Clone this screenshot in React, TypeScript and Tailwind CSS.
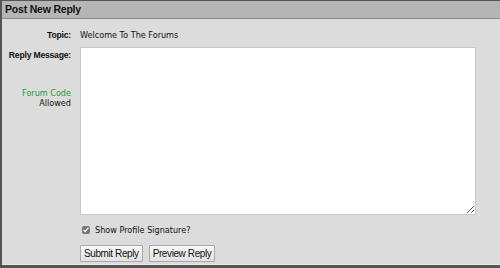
export default function App() {
  const body = { fontFamily: '"DejaVu Sans", Verdana, sans-serif' };
  const bold = { fontFamily: '"Liberation Sans", Arial, sans-serif' };

  return (
    <div className="w-[500px] h-[268px] bg-[#555] pl-[2px] pt-[1px] pb-[3px] overflow-hidden" style={body}>
      <div className="h-full flex flex-col bg-[#dcdcdc] border-b border-[#ececec]">
        {/* title bar */}
        <div className="h-[18px] bg-[#b5b5b5] border-b border-[#8c8c8c] flex items-center pl-[3px]">
          <h1 className="text-[10.5px] tracking-[-0.2px] font-bold text-[#111] leading-none" style={bold}>
            Post New Reply
          </h1>
        </div>

        <div className="flex-1 grid grid-cols-[69px_1fr] gap-x-[9px] pt-[9px] text-[8.1px] text-[#111]">
          <div className="text-right font-bold text-[8.6px] tracking-[-0.2px] leading-[14px] whitespace-nowrap" style={bold}>
            Topic:
          </div>
          <div className="leading-[14px]">Welcome To The Forums</div>

          <div className="text-right leading-[14px] pt-[4px] whitespace-nowrap">
            <div className="font-bold text-[8.6px] tracking-[-0.2px]" style={bold}>Reply Message:</div>
            <div className="mt-[26px] leading-[10px]">
              <div className="text-[#2a9a3c]">Forum Code</div>
              <div>Allowed</div>
            </div>
          </div>
          <div className="pt-[3px] pr-[24px]">
            <textarea className="block w-full h-[168px] bg-white border border-[#c8c8c8] resize-y outline-none" />

            <label className="flex items-center gap-[5px] mt-[8px] leading-[14px]">
              <input type="checkbox" defaultChecked className="w-[8px] h-[8px] ml-[2px] m-0 accent-[#777]" />
              <span>Show Profile Signature?</span>
            </label>

            <div className="flex gap-[6px] mt-[8px]" style={bold}>
              <button className="h-[17px] px-[3px] text-[10px] tracking-[-0.4px] leading-none text-[#111] bg-gradient-to-b from-[#f8f8f8] to-[#e2e2e2] border border-[#a9a9a9] rounded-[1px]">
                Submit Reply
              </button>
              <button className="h-[17px] px-[3px] text-[10px] tracking-[-0.4px] leading-none text-[#111] bg-gradient-to-b from-[#f8f8f8] to-[#e2e2e2] border border-[#a9a9a9] rounded-[1px]">
                Preview Reply
              </button>
            </div>
          </div>
        </div>
      </div>
    </div>
  );
}
